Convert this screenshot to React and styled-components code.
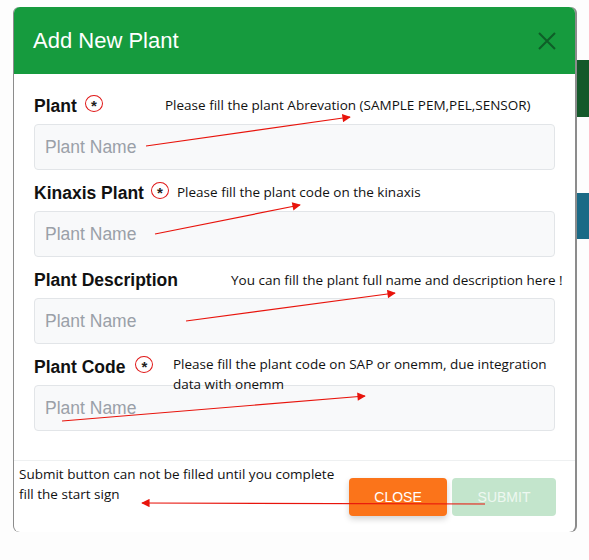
import React from 'react';
import styled, { createGlobalStyle } from 'styled-components';

const GlobalStyle = createGlobalStyle`
  html, body {
    margin: 0;
    padding: 0;
    background: #fdfdfd;
    font-family: "Liberation Sans", Arial, sans-serif;
  }
`;

const Page = styled.div`
  position: relative;
  width: 589px;
  height: 560px;
  box-sizing: border-box;
  padding: 7px 14px 0 14px;
  background:
    linear-gradient(#14592a, #14592a) right 0 top 60px / 12px 57px no-repeat,
    linear-gradient(#1b6a86, #1b6a86) right 0 top 193px / 12px 46px no-repeat,
    #fdfdfd;
`;

const Modal = styled.div`
  width: 561px;
  background: #fff;
  border-radius: 6px;
  overflow: hidden;
  box-shadow: -1px 0 0 #8c8c8c, 2px 0 0 #8c8c8c;
`;

const Header = styled.div`
  height: 67px;
  background: #169b3e;
  display: flex;
  align-items: center;
  justify-content: space-between;
  padding: 0 18px 0 19px;
`;

const Title = styled.h1`
  margin: 0;
  font-size: 22px;
  font-weight: 400;
  color: #fff;
`;

const CloseIcon = styled.svg`
  width: 20px;
  height: 20px;
  display: block;
`;

const Body = styled.div`
  padding: 14px 20px 29px 20px;
  display: flex;
  flex-direction: column;
  gap: 5px;
`;

const Field = styled.div`
  display: flex;
  flex-direction: column;
`;

const LabelRow = styled.div`
  height: 36px;
  display: flex;
  align-items: center;
`;

const Label = styled.label`
  font-size: 17.5px;
  font-weight: 700;
  color: #111;
`;

const Required = styled.span`
  width: 18px;
  height: 17px;
  margin-left: ${p => p.gap}px;
  margin-top: -6px;
  border: 1px solid #e01818;
  border-radius: 50%;
  display: flex;
  justify-content: center;
  font-size: 15px;
  font-weight: 700;
  color: #222;
  line-height: 1;
  padding-top: 2px;
  box-sizing: border-box;
`;

const Input = styled.input`
  height: 46px;
  box-sizing: border-box;
  width: 100%;
  margin: 0;
  padding: 0 10px;
  background: #f8f9fa;
  border: 1px solid #e2e5e8;
  border-radius: 4px;
  font-family: "Liberation Sans", Arial, sans-serif;
  font-size: 17.5px;
  outline: 0;
  &::placeholder {
    color: #9aa0a8;
  }
`;

const Footer = styled.div`
  border-top: 1px solid #eef0f1;
  height: 72px;
  box-sizing: border-box;
  padding: 17px 19px 0 20px;
  display: flex;
  justify-content: flex-end;
  gap: 5px;
`;

const Button = styled.button`
  height: 38px;
  width: ${p => p.w}px;
  border: 0;
  border-radius: 4px;
  font-family: "Liberation Sans", Arial, sans-serif;
  font-size: 14px;
  background: ${p => (p.primary ? '#fb741a' : '#c3e5cc')};
  color: ${p => (p.primary ? '#fff' : '#eef8f1')};
  box-shadow: ${p => (p.primary ? '0 3px 6px rgba(0,0,0,0.18)' : 'none')};
`;

const Note = styled.div`
  position: absolute;
  left: ${p => p.x}px;
  top: ${p => p.y}px;
  font-family: "Open Sans", "Noto Sans", sans-serif;
  font-size: 13.5px;
  line-height: 20px;
  color: #111;
  white-space: pre;
`;

const Arrows = styled.svg`
  position: absolute;
  left: 0;
  top: 0;
  width: 589px;
  height: 560px;
  pointer-events: none;
`;

const fields = [
  { label: 'Plant', required: true, gap: 8 },
  { label: 'Kinaxis Plant', required: true, gap: 7 },
  { label: 'Plant Description', required: false },
  { label: 'Plant Code', required: true, gap: 10 },
];

const notes = [
  { x: 165, y: 95, text: 'Please fill the plant Abrevation (SAMPLE PEM,PEL,SENSOR)' },
  { x: 177, y: 182, text: 'Please fill the plant code on the kinaxis' },
  { x: 231, y: 270, text: 'You can fill the plant full name and description here !' },
  { x: 173, y: 354, text: 'Please fill the plant code on SAP or onemm, due integration\ndata with onemm' },
  { x: 19, y: 464, text: 'Submit button can not be filled until you complete\nfill the start sign' },
];

const arrows = [
  [146, 146, 350, 117],
  [155, 234, 300, 205],
  [186, 321, 395, 293],
  [62, 421, 365, 396],
  [485, 504, 142, 503],
];

export default function App() {
  return (
    <Page>
      <GlobalStyle />
      <Modal>
        <Header>
          <Title>Add New Plant</Title>
          <CloseIcon viewBox="0 0 20 20">
            <path d="M2 2 L18 18 M18 2 L2 18" stroke="#0f5e28" strokeWidth="2" fill="none" />
          </CloseIcon>
        </Header>
        <Body>
          {fields.map(f => (
            <Field key={f.label}>
              <LabelRow>
                <Label>{f.label}</Label>
                {f.required && <Required gap={f.gap}>*</Required>}
              </LabelRow>
              <Input placeholder="Plant Name" />
            </Field>
          ))}
        </Body>
        <Footer>
          <Button primary w={98}>CLOSE</Button>
          <Button w={104}>SUBMIT</Button>
        </Footer>
      </Modal>
      {notes.map(n => (
        <Note key={n.text} x={n.x} y={n.y}>{n.text}</Note>
      ))}
      <Arrows viewBox="0 0 589 560">
        <defs>
          <marker id="head" viewBox="0 0 10 10" refX="9" refY="5" markerWidth="9" markerHeight="7" orient="auto">
            <path d="M0 0 L10 5 L0 10 z" fill="#e8140c" />
          </marker>
        </defs>
        {arrows.map(([x1, y1, x2, y2]) => (
          <line key={`${x1}-${y1}`} x1={x1} y1={y1} x2={x2} y2={y2} stroke="#e8140c" strokeWidth="1.2" markerEnd="url(#head)" />
        ))}
      </Arrows>
    </Page>
  );
}
